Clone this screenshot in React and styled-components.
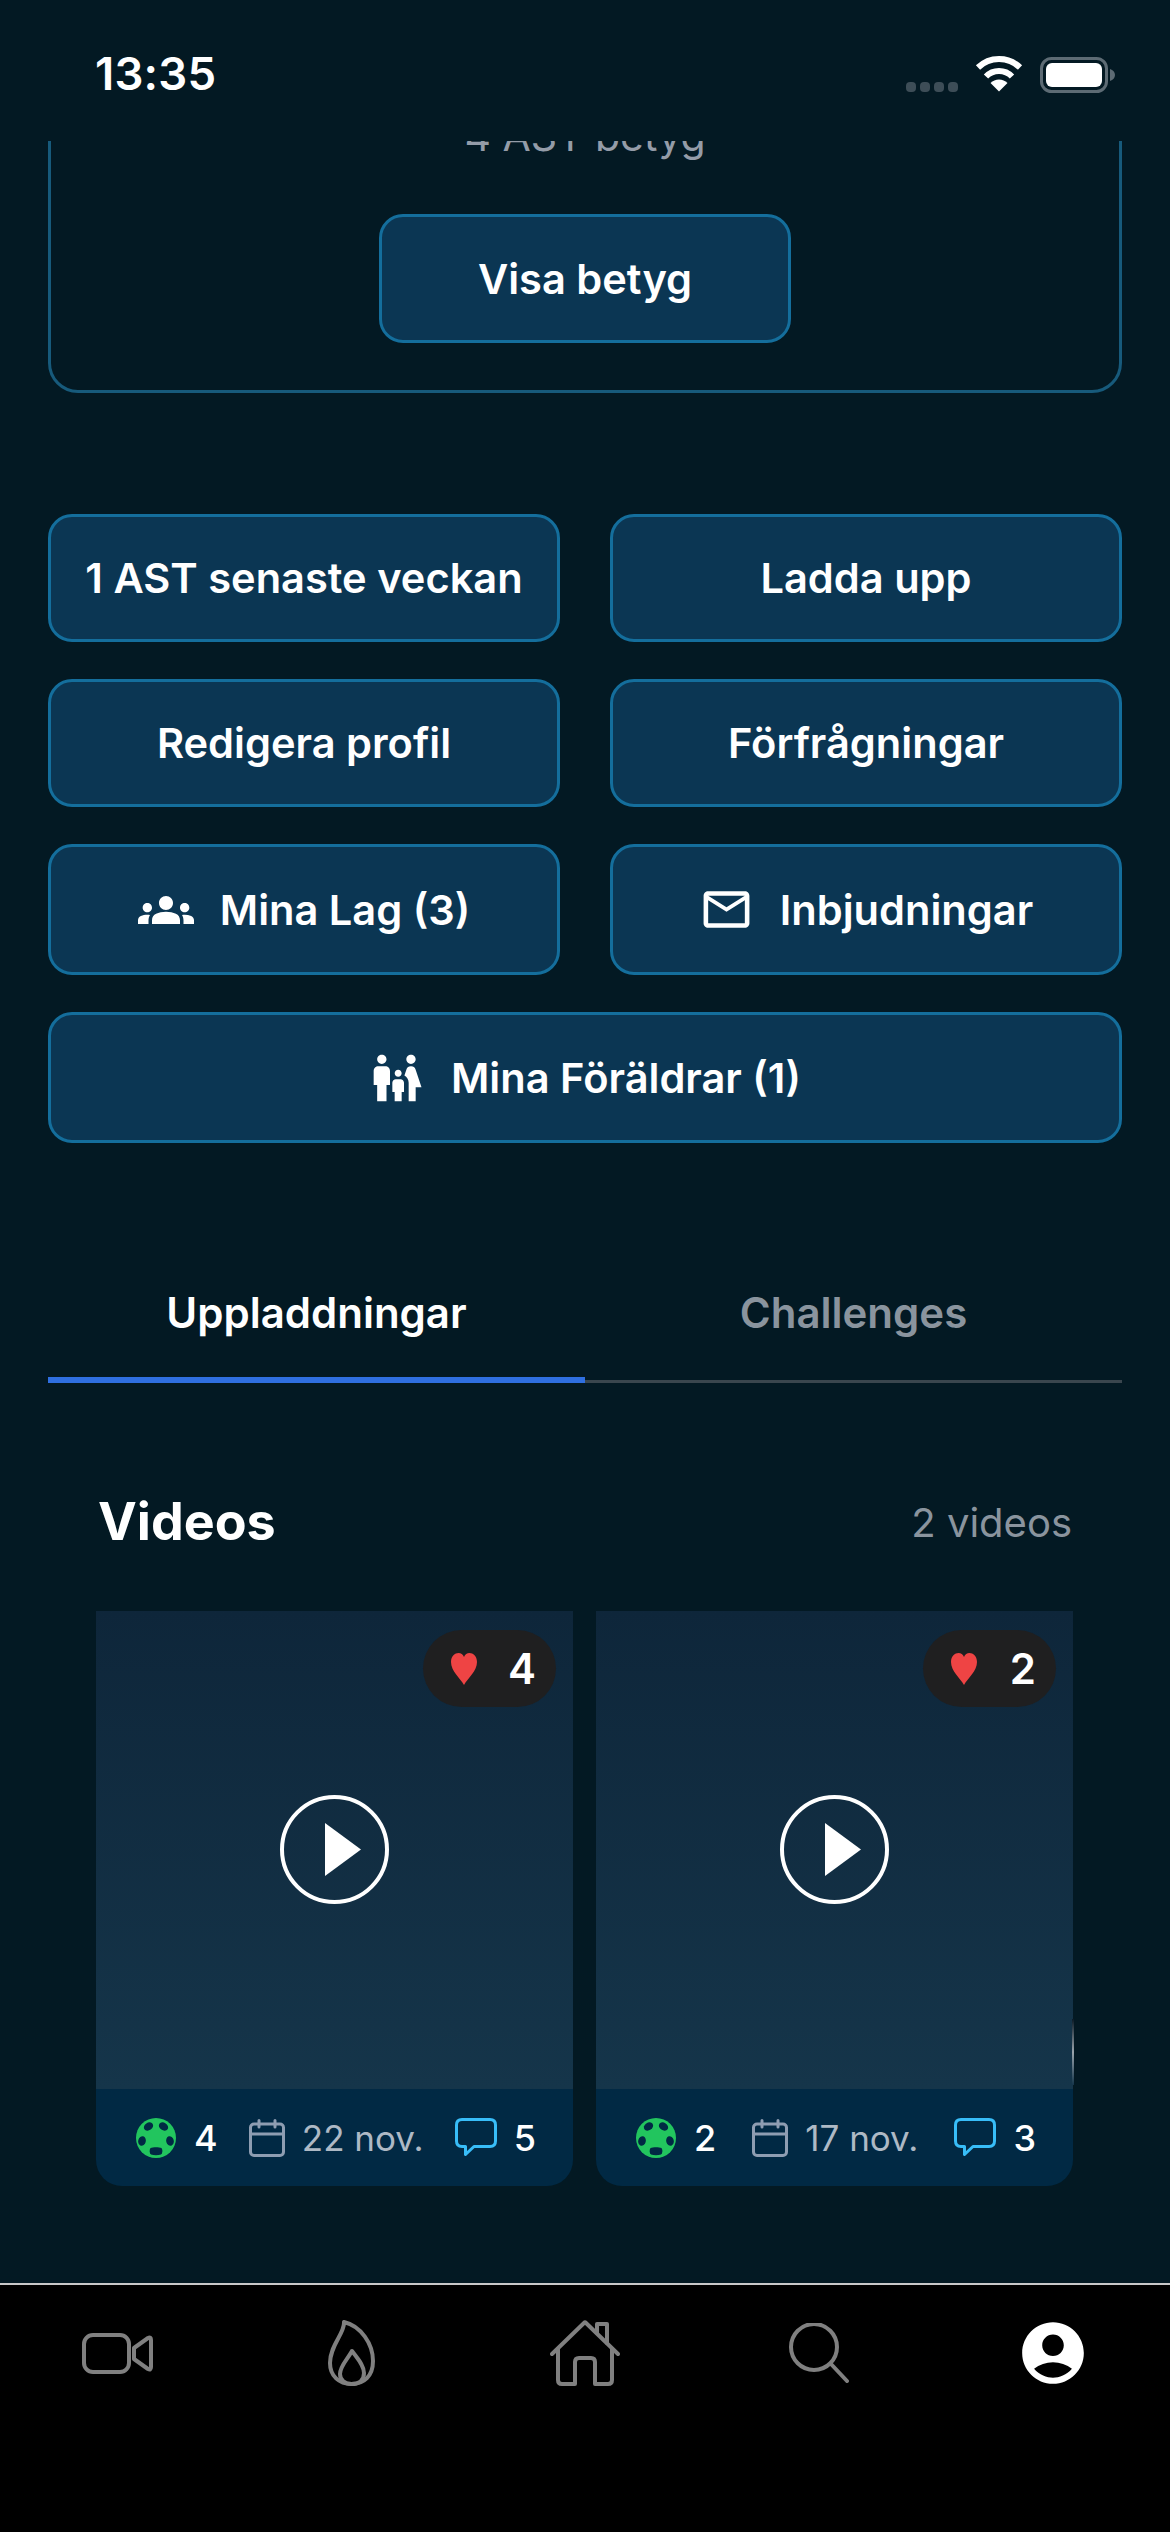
import React from 'react';
import styled, { createGlobalStyle } from 'styled-components';
import { MdGroups, MdOutlineMailOutline, MdFamilyRestroom, MdAccountCircle } from 'react-icons/md';

const Global = createGlobalStyle`
  html, body { margin: 0; padding: 0; background: #031923; }
  * { box-sizing: border-box; }
  body { font-family: Inter, "Noto Sans", "Liberation Sans", sans-serif; color: #fff; }
`;

const Screen = styled.div`
  width: 1170px; height: 2532px; display: flex; flex-direction: column;
  overflow: hidden; background: #031923;
`;
const StatusBar = styled.div`
  height: 141px; flex: none; display: flex; justify-content: space-between; align-items: flex-start;
  padding: 50px 55px 0 95px; position: relative; z-index: 2; background: #031923;
`;
const Time = styled.div`
  font-size: 45.5px; line-height: 48px; font-weight: 600; letter-spacing: 0.2px;
`;
const StatusIcons = styled.div`
  display: flex; align-items: flex-end; gap: 17px; padding-top: 5px;
`;
const Dots = styled.div`
  display: flex; gap: 4px; padding-bottom: 1px;
`;
const Dot = styled.span`
  width: 10px; height: 10px; border-radius: 4px; background: #3d4d57;
`;
const Scroll = styled.main`
  flex: 1; min-height: 0; overflow: hidden; display: flex; flex-direction: column;
`;
const RatingCard = styled.section`
  margin: -40px 48px 0; padding-top: 9px; height: 292px; border: 3px solid #175a7b; border-radius: 0 0 30px 30px;
  display: flex; flex-direction: column; align-items: center;
`;
const RatingText = styled.div`
  font-size: 41px; line-height: 46px; color: #949ca8; margin-bottom: 55px;
`;
const ActionButton = styled.button`
  display: flex; align-items: center; justify-content: center; gap: ${p => p.$gap || 22}px;
  font: 600 41.6px/48px Inter, sans-serif; color: #fff; background: #0b3653;
  border: 3px solid #146e9c; border-radius: 24px; padding: 0;
  width: ${p => p.$w ? p.$w + 'px' : '100%'};
  height: ${p => p.$h || 128}px;
  grid-column: ${p => p.$wide ? '1 / -1' : 'auto'};
`;
const Grid = styled.div`
  margin: 121px 48px 0; display: grid; grid-template-columns: 512px 512px; column-gap: 50px; row-gap: 37px;
`;
const Tabs = styled.div`
  margin: 100px 48px 0; display: grid; grid-template-columns: 1fr 1fr; border-bottom: 3px solid #3a464e;
`;
const Tab = styled.div`
  height: 137px; display: flex; align-items: center; justify-content: center; padding-top: 2px;
  font-size: 42px; font-weight: 600; color: ${p => p.$active ? '#fff' : '#8a949e'};
  position: relative;
  &::after {
    content: ''; display: ${p => p.$active ? 'block' : 'none'};
    position: absolute; left: 0; right: 0; bottom: -3px; height: 6px; background: #2f6fe0;
  }
`;
const VideosHead = styled.div`
  margin: 105px 98px 0; height: 68px; display: flex; align-items: center; justify-content: space-between;
`;
const VideosTitle = styled.h2`
  margin: 0; font-size: 52px; font-weight: 700; line-height: 68px;
`;
const VideosCount = styled.div`
  font-size: 40px; color: #8a949e;
`;
const CardRow = styled.div`
  margin: 55px 0 0 96px; display: flex; gap: 23px;
`;
const VideoCard = styled.article`
  width: 477px; height: 575px; display: flex; flex-direction: column; position: relative;
`;
const Thumb = styled.div`
  height: 478px; flex: none; background: linear-gradient(180deg, #0e263a 0%, #15354a 100%);
  display: flex; align-items: center; justify-content: center; position: relative;
`;
const Edge = styled.span`
  position: absolute; right: -1px; bottom: 4px; width: 2px; height: 66px;
  background: linear-gradient(180deg, #0a1a26 0%, #9aa4ac 50%, #15354a 100%);
`;
const LikePill = styled.div`
  position: absolute; top: 19px; right: 17px; width: 133px; height: 77px; border-radius: 39px;
  background: #1f1f20; display: flex; align-items: center; justify-content: space-between;
  padding: 0 20px 0 28px; font-size: 42px; font-weight: 600;
`;
const PlayRing = styled.div`
  width: 109px; height: 109px; border: 4px solid #fff; border-radius: 50%;
  display: flex; align-items: center; justify-content: center; margin-left: -1px; margin-top: -1px;
`;
const CardFooter = styled.div`
  flex: 1; background: #012944; border-radius: 0 0 26px 26px;
  display: flex; align-items: center; justify-content: space-between; padding: 0 37px 0 40px;
`;
const Stat = styled.div`
  display: flex; align-items: center; gap: ${p => p.$gap || 18}px; font-size: ${p => p.$muted ? 35 : 36}px;
  font-weight: ${p => p.$muted ? 400 : 500}; color: ${p => p.$muted ? '#aeb9c5' : '#fff'};
`;
const BottomNav = styled.nav`
  flex: none; height: 249px; background: #000; border-top: 2px solid #c8c8c8;
  display: grid; grid-template-columns: repeat(5, 234px); padding-top: 35px;
`;
const NavCell = styled.div`
  height: 66px; display: flex; align-items: center; justify-content: center;
`;

const Wifi = () => (
  <svg width="48" height="37" viewBox="0 0 48 37" style={{ marginBottom: 1 }}>
    <g fill="none" stroke="#fff" strokeWidth="6">
      <path d="M3 12.5 A 30 30 0 0 1 45 12.5" />
      <path d="M11 21.5 A 18 18 0 0 1 37 21.5" />
    </g>
    <path d="M24 36.5 L15.5 28 A 12 12 0 0 1 32.5 28 Z" fill="#fff" />
  </svg>
);
const Battery = () => (
  <svg width="75" height="36" viewBox="0 0 75 36">
    <rect x="1.5" y="1.5" width="65" height="33" rx="10" fill="none" stroke="#5d6b74" strokeWidth="3" />
    <rect x="6" y="6" width="56" height="24" rx="6" fill="#fff" />
    <path d="M70 12 C73 13 75 15 75 18 C75 21 73 23 70 24 Z" fill="#5d6b74" />
  </svg>
);
const Heart = () => (
  <svg width="26" height="32" viewBox="0 0 26 32">
    <path d="M13 32 C9 25 0 18 0 9 C0 3 4 0 7.500 0 C10 0 12 1.500 13 4 C14 1.500 16 0 18.500 0 C22 0 26 3 26 9 C26 18 17 25 13 32 Z" fill="#ef4444" />
  </svg>
);
const PlayTriangle = () => (
  <svg width="36" height="53" viewBox="0 0 36 53" style={{ marginLeft: 17 }}>
    <path d="M0 0 L36 26.500 L0 53 Z" fill="#fff" />
  </svg>
);
const Ball = () => (
  <svg width="40" height="40" viewBox="0 0 40 40">
    <circle cx="20" cy="20" r="20" fill="#22c55e" />
    <g fill="#012944">
      <ellipse cx="12.500" cy="8.500" rx="5" ry="3.800" transform="rotate(-35 12.500 8.500)" />
      <ellipse cx="27.500" cy="8.500" rx="5" ry="3.800" transform="rotate(35 27.500 8.500)" />
      <ellipse cx="6" cy="23" rx="3.800" ry="4.800" transform="rotate(15 6 23)" />
      <ellipse cx="34" cy="23" rx="3.800" ry="4.800" transform="rotate(-15 34 23)" />
      <path d="M14.500 30 C17 29 23 29 25.500 30 C27 32 26.500 35 25 36.500 C22 37.500 18 37.500 15 36.500 C13.500 35 13 32 14.500 30 Z" />
    </g>
  </svg>
);
const Calendar = () => (
  <svg width="36" height="38" viewBox="0 0 36 38" fill="none" stroke="#8e9db2" strokeWidth="3" strokeLinecap="round" strokeLinejoin="round">
    <rect x="1.500" y="5" width="33" height="31.500" rx="3.500" />
    <path d="M1.500 15 H34.500 M10 1.500 V8 M26 1.500 V8" />
  </svg>
);
const Comment = () => (
  <svg width="42" height="39" viewBox="0 0 42 39" fill="none" stroke="#38bdf8" strokeWidth="3" strokeLinejoin="round">
    <path d="M7 1.500 H35 C38.500 1.500 40.500 3.500 40.500 7 V23 C40.500 26.500 38.500 28.500 35 28.500 H19 L10.500 36.500 V28.500 H7 C3.500 28.500 1.500 26.500 1.500 23 V7 C1.500 3.500 3.500 1.500 7 1.500 Z" />
  </svg>
);
const VideoIcon = () => (
  <svg width="71" height="41" viewBox="0 0 71 41" fill="none" stroke="#808080" strokeWidth="4" strokeLinejoin="round">
    <rect x="2" y="2" width="45" height="37" rx="9" />
    <path d="M52 15 L66 5 Q69 3.500 69 7 V34 Q69 37.500 66 36 L52 26 Z" />
  </svg>
);
const FlameIcon = () => (
  <svg width="47" height="66" viewBox="0 0 47 66" fill="none" stroke="#808080" strokeWidth="4" strokeLinejoin="round">
    <path d="M16 2 C17 13 2 25 2 43 C2 56 11 64 23.500 64 C36 64 45 56 45 41 C45 24 33 6 16 2 Z" />
    <path d="M24 31 C19 40 12 46 12 54 C12 60 17 64 23.500 64 C31 64 36 60 36 53 C36 45 29 38 24 31 Z" />
  </svg>
);
const HomeIcon = () => (
  <svg width="70" height="66" viewBox="0 0 70 66" fill="none" stroke="#808080" strokeWidth="4" strokeLinecap="round" strokeLinejoin="round">
    <path d="M2 34 L34 3 Q35 2 36 3 L68 34" />
    <path d="M8 29 V60 Q8 64 12 64 H25 V42 Q25 38 29 38 H41 Q45 38 45 42 V64 H58 Q62 64 62 60 V29" />
    <path d="M47 13 V4 H57 V23" />
  </svg>
);
const SearchIcon = () => (
  <svg width="60" height="60" viewBox="0 0 60 60" fill="none" stroke="#808080" strokeWidth="4" strokeLinecap="round">
    <circle cx="25" cy="24" r="23" />
    <path d="M42 41 L58 58" />
  </svg>
);

const videos = [
  { likes: 4, goals: 4, date: '22 nov.', comments: 5 },
  { likes: 2, goals: 2, date: '17 nov.', comments: 3, edge: true },
];

export default function App() {
  return (
    <Screen>
      <Global />
      <StatusBar>
        <Time>13:35</Time>
        <StatusIcons>
          <Dots><Dot /><Dot /><Dot /><Dot /></Dots>
          <Wifi />
          <Battery />
        </StatusIcons>
      </StatusBar>
      <Scroll>
        <RatingCard>
          <RatingText>4 AST betyg</RatingText>
          <ActionButton $w={412} $h={129}>Visa betyg</ActionButton>
        </RatingCard>
        <Grid>
          <ActionButton>1 AST senaste veckan</ActionButton>
          <ActionButton>Ladda upp</ActionButton>
          <ActionButton>Redigera profil</ActionButton>
          <ActionButton>Förfrågningar</ActionButton>
          <ActionButton $h={131} $gap={26}><MdGroups size={56} />Mina Lag (3)</ActionButton>
          <ActionButton $h={131} $gap={26}><MdOutlineMailOutline size={55} />Inbjudningar</ActionButton>
          <ActionButton $wide $h={131} $gap={26}><MdFamilyRestroom size={56} />Mina Föräldrar (1)</ActionButton>
        </Grid>
        <Tabs>
          <Tab $active>Uppladdningar</Tab>
          <Tab>Challenges</Tab>
        </Tabs>
        <VideosHead>
          <VideosTitle>Videos</VideosTitle>
          <VideosCount>2 videos</VideosCount>
        </VideosHead>
        <CardRow>
          {videos.map(v => (
            <VideoCard key={v.date}>
              <Thumb>
                <LikePill><Heart />{v.likes}</LikePill>
                <PlayRing><PlayTriangle /></PlayRing>
                {v.edge && <Edge />}
              </Thumb>
              <CardFooter>
                <Stat><Ball />{v.goals}</Stat>
                <Stat $muted $gap={17}><Calendar />{v.date}</Stat>
                <Stat $gap={17}><Comment />{v.comments}</Stat>
              </CardFooter>
            </VideoCard>
          ))}
        </CardRow>
      </Scroll>
      <BottomNav>
        <NavCell><VideoIcon /></NavCell>
        <NavCell><FlameIcon /></NavCell>
        <NavCell><HomeIcon /></NavCell>
        <NavCell><SearchIcon /></NavCell>
        <NavCell><MdAccountCircle size={74} color="#fff" /></NavCell>
      </BottomNav>
    </Screen>
  );
}
